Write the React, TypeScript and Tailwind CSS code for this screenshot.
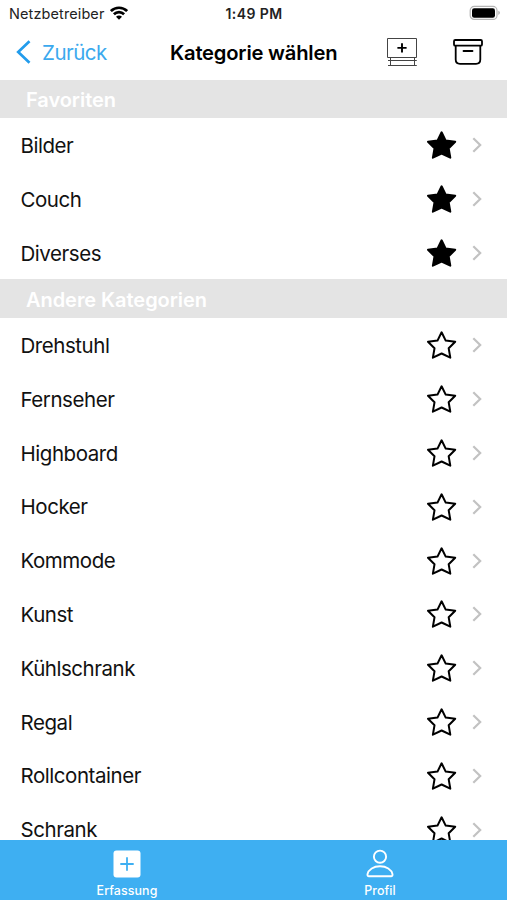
type RowProps = { name: string; favorite?: boolean };

const favorites = ['Bilder', 'Couch', 'Diverses'];
const others = [
  'Drehstuhl', 'Fernseher', 'Highboard', 'Hocker', 'Kommode',
  'Kunst', 'Kühlschrank', 'Regal', 'Rollcontainer', 'Schrank',
];

function StatusBar() {
  return (
    <div className="flex h-[25px] shrink-0 items-center justify-between pt-[2px] pr-[6px] pl-[9px]">
      <div className="flex w-[178px] items-center gap-[6px]">
        <span className="text-[14.5px] leading-[18px] tracking-[0.1px] whitespace-nowrap text-[#222]">Netzbetreiber</span>
        <svg width="18" height="14" viewBox="0 0 18 14" fill="none" stroke="#000" strokeWidth="2.7" className="-mt-[1px]">
          <path d="M0.9 5.1C5.4 0.6 12.6 0.6 17.1 5.1" />
          <path d="M3.9 8.3C6.8 5.4 11.2 5.4 14.1 8.3" />
          <path d="M9 13.8L6 10.8C7.7 9.2 10.3 9.2 12 10.8Z" fill="#000" stroke="none" />
        </svg>
      </div>
      <span className="text-[14px] leading-[18px] font-semibold tracking-[0.42px] whitespace-nowrap text-[#222]">1:49 PM</span>
      <div className="flex w-[180px] justify-end">
        <svg width="32" height="16" viewBox="0 0 32 16" className="-mt-[1px]">
          <rect x="1.2" y="1.4" width="26.8" height="13" rx="4" fill="#fff" stroke="#b5b5b5" strokeWidth="1.2" />
          <rect x="3" y="3.2" width="23" height="9.6" rx="2.2" fill="#000" />
          <path d="M29.4 5.8C31.3 6.5 31.3 9.3 29.4 10Z" fill="#aaa" />
        </svg>
      </div>
    </div>
  );
}

function NavBar() {
  return (
    <header className="flex h-[54.5px] shrink-0 items-center">
      <div className="flex w-[170px] items-center pl-[16px]">
        <svg width="16" height="24" viewBox="0 0 16 24" fill="none" stroke="#229cec" strokeWidth="2.7">
          <path d="M13.5 1.2L2.2 12L13.5 22.8" />
        </svg>
        <span className="ml-[10px] pt-px text-[20.5px] leading-[26px] tracking-[-0.5px] text-[#3ba9ee]">Zurück</span>
      </div>
      <h1 className="w-[217px] pt-px text-[20.2px] leading-[26px] font-semibold tracking-[-0.2px] whitespace-nowrap text-black">Kategorie wählen</h1>
      <svg width="31" height="30" viewBox="0 0 31 30" fill="none" stroke="#444">
        <path d="M0.5 1.5H29.5V20.5H0.5Z" strokeWidth="1" />
        <path d="M15 6.3V15.5M10.4 10.9H19.6" stroke="#000" strokeWidth="1.9" />
        <path d="M1 23.5H29.8M1 28.5H29.8M3.5 21V28M27.5 21V28" strokeWidth="1" />
      </svg>
      <svg width="30" height="26" viewBox="0 0 30 26" fill="none" stroke="#000" strokeWidth="1.8" strokeLinecap="round" className="ml-[35px]">
        <rect x="1" y="1" width="28" height="5.7" rx="1.3" />
        <path d="M2.7 7V20.5Q2.7 24.8 7 24.8H23Q27.3 24.8 27.3 20.5V7M10.5 12H19.5" />
      </svg>
    </header>
  );
}

function SectionHeader({ title }: { title: string }) {
  return (
    <h2 className="flex h-[38.6px] shrink-0 items-center bg-[#e4e4e4] pt-[2px] pl-[26px] text-[20px] leading-[26px] font-semibold tracking-[-0.05px] text-white">
      {title}
    </h2>
  );
}

function Row({ name, favorite = false }: RowProps) {
  return (
    <li className="flex h-[53.8px] items-center pt-[0.9px] pr-[25px] pl-[20.5px]">
      <span className="flex-1 pt-px text-[20.5px] leading-[26px] tracking-[-0.45px] text-[#111]">{name}</span>
      <svg width="30" height="28" viewBox="0 0 30 28" stroke="#000" strokeWidth="2" strokeLinejoin="round" fill={favorite ? '#000' : 'none'}>
        <path d="M14.6 1.3L18.7 9.6L28.2 10.7L21.7 17.3L23.3 26.7L14.6 22.5L5.9 26.7L7.5 17.3L1 10.7L10.5 9.6Z" />
      </svg>
      <svg width="10" height="16" viewBox="0 0 10 16" fill="none" stroke="#c2c2c2" strokeWidth="2.2" className="ml-[15px]">
        <path d="M1.3 1.2L8.2 8L1.3 14.8" />
      </svg>
    </li>
  );
}

function TabBar() {
  return (
    <nav className="flex h-[60px] shrink-0 bg-[#3eaff2] text-[12.4px] leading-[16px] font-medium text-white">
      <div className="flex w-[254px] flex-col items-center pt-[9.5px]">
        <svg width="28" height="28" viewBox="0 0 28 28">
          <rect x="0.5" y="0.5" width="27" height="27" rx="3" fill="#fff" />
          <path d="M14 7.3V20.7M7.3 14H20.7" stroke="#3eaff2" strokeWidth="1.8" />
        </svg>
        <span className="mt-[5.5px] tracking-[0.1px]">Erfassung</span>
      </div>
      <div className="flex w-[252px] flex-col items-center pt-[9px]">
        <svg width="28" height="29" viewBox="0 0 28 29" fill="none" stroke="#fff" strokeWidth="1.9">
          <circle cx="14" cy="7.7" r="6.1" />
          <path d="M3 27.2H25Q26.8 27.2 26.5 25.2C25.4 20.5 20.5 17.3 14 17.3S2.6 20.5 1.5 25.2Q1.2 27.2 3 27.2Z" />
        </svg>
        <span className="mt-[5px] tracking-[0.1px]">Profil</span>
      </div>
    </nav>
  );
}

export default function App() {
  return (
    <div className="flex h-[900px] w-[507px] flex-col overflow-hidden bg-white font-[Inter,'Liberation_Sans',sans-serif]">
      <StatusBar />
      <NavBar />
      <main className="min-h-0 flex-1 overflow-hidden">
        <SectionHeader title="Favoriten" />
        <ul>{favorites.map((name) => <Row key={name} name={name} favorite />)}</ul>
        <SectionHeader title="Andere Kategorien" />
        <ul>{others.map((name) => <Row key={name} name={name} />)}</ul>
      </main>
      <TabBar />
    </div>
  );
}
